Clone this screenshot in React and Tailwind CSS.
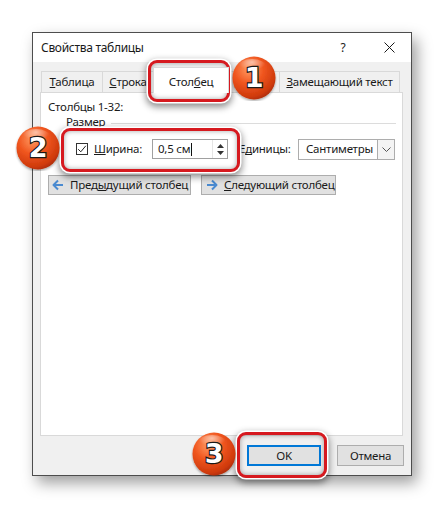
import React from "react";

function Badge({ n, x, y }) {
  const id = "g" + n;
  return (
    <svg
      className="absolute"
      style={{ left: x - 23, top: y - 23 }}
      width="46"
      height="46"
      viewBox="0 0 46 46"
    >
      <defs>
        <radialGradient id={id} cx="0.38" cy="0.3" r="0.75">
          <stop offset="0" stopColor="#ff9a62" />
          <stop offset="0.45" stopColor="#f0561f" />
          <stop offset="0.85" stopColor="#cf3a0c" />
          <stop offset="1" stopColor="#a82a06" />
        </radialGradient>
        <radialGradient id={id + "h"} cx="0.5" cy="0.2" r="0.5">
          <stop offset="0" stopColor="#ffffff" stopOpacity="0.55" />
          <stop offset="1" stopColor="#ffffff" stopOpacity="0" />
        </radialGradient>
        <filter id={id + "s"} x="-20%" y="-20%" width="140%" height="140%">
          <feDropShadow dx="0" dy="1.5" stdDeviation="1.2" floodColor="#000" floodOpacity="0.35" />
        </filter>
      </defs>
      <circle cx="23" cy="23" r="21.5" fill={`url(#${id})`} filter={`url(#${id}s)`} />
      <ellipse cx="21" cy="12" rx="14" ry="8" fill={`url(#${id}h)`} />
      <text
        x="23"
        y="32"
        textAnchor="middle"
        fontFamily="'DejaVu Sans', sans-serif"
        fontWeight="bold"
        fontSize="27"
        fill="#ffffff"
        stroke="#1a1a1a"
        strokeWidth="2.4"
        paintOrder="stroke"
      >
        {n}
      </text>
    </svg>
  );
}

function RedBox({ x, y, w, h }) {
  return (
    <div
      className="absolute rounded-[9px] border-[3px] border-[#d6191f] shadow-[0_0_0_1.5px_#ffffff,0_3px_7px_2px_rgba(0,0,0,0.45),inset_0_0_5px_rgba(0,0,0,0.35)]"
      style={{ left: x, top: y, width: w, height: h }}
    />
  );
}

function Tab({ children, selected, w }) {
  if (selected) {
    return (
      <div
        className="h-[26px] bg-white border-l border-t border-r border-[#d9d9d9] flex items-center justify-center -mb-px -ml-px relative z-10 pt-[2px]"
        style={{ width: w }}
      >
        {children}
      </div>
    );
  }
  return (
    <div
      className="h-[21px] bg-[#f0f0f0] border-l border-t border-r border-[#d9d9d9] flex items-center justify-center -ml-px first:ml-0"
      style={{ width: w }}
    >
      {children}
    </div>
  );
}

function ArrowLeft() {
  return (
    <svg width="12" height="12" viewBox="0 0 12 12">
      <path d="M11 6H2M6 1.5L1.5 6L6 10.5" fill="none" stroke="#4a8ad0" strokeWidth="2" strokeLinejoin="round" />
    </svg>
  );
}

function ArrowRight() {
  return (
    <svg width="12" height="12" viewBox="0 0 12 12">
      <path d="M1 6H10M6 1.5L10.5 6L6 10.5" fill="none" stroke="#4a8ad0" strokeWidth="2" strokeLinejoin="round" />
    </svg>
  );
}

export default function App() {
  return (
    <div className="relative w-[444px] h-[508px] bg-white text-[11.5px] tracking-[-0.25px] text-[#1a1a1a] font-['Noto_Sans',sans-serif] leading-none whitespace-nowrap overflow-hidden">
      <div className="pt-[32px] pl-[32px]">
        <div className="w-[380px] h-[444px] border border-[#4d4d4d] bg-[#f0f0f0] shadow-[5px_7px_14px_rgba(0,0,0,0.38)] flex flex-col">
          {/* title bar */}
          <div className="h-[29px] bg-white flex items-center pl-[8px]">
            <div className="flex-1 text-[12px] tracking-[-0.3px] text-[#1a1a1a]">Свойства таблицы</div>
            <div className="w-[20px] text-[12px] text-center mr-[31px]">?</div>
            <svg className="mr-[16px]" width="11" height="11" viewBox="0 0 11 11">
              <path d="M0.5 0.5L10.5 10.5M10.5 0.5L0.5 10.5" stroke="#1a1a1a" strokeWidth="1" />
            </svg>
          </div>

          {/* body */}
          <div className="flex-1 flex flex-col pt-[8px] pl-[7px] pr-[8px]">
            <div className="flex items-end h-[22px] pl-px">
              <Tab w={62}>
                <span><span className="underline">Т</span>аблица</span>
              </Tab>
              <Tab w={52}>
                <span><span className="underline">С</span>трока</span>
              </Tab>
              <Tab selected w={76}>
                <span>Стол<span className="underline">б</span>ец</span>
              </Tab>
              <Tab w={52}>
                <span><span className="underline">Я</span>чейка</span>
              </Tab>
              <Tab w={121}>
                <span><span className="underline">З</span>амещающий текст</span>
              </Tab>
            </div>

            <div className="h-[344px] bg-white border border-[#d9d9d9] pt-[7px] pl-[7px]">
              <div className="h-[14px] flex items-center">Столбцы 1-32:</div>
              <div className="h-[16px] flex items-center pl-[18px] pr-[6px]">
                <span>Размер</span>
                <div className="flex-1 h-px bg-[#dcdcdc] ml-[6px] mt-[2px]" />
              </div>

              <div className="mt-[9px] h-[20px] flex items-center pl-[28px]">
                <div className="w-[12px] h-[12px] border border-[#333] bg-white flex items-center justify-center">
                  <svg width="10" height="10" viewBox="0 0 10 10">
                    <path d="M1.2 5.2L3.8 7.8L8.8 1.8" fill="none" stroke="#222" strokeWidth="1" />
                  </svg>
                </div>
                <div className="w-[64px] pl-[6px]">
                  <span className="underline">Ш</span>ирина:
                </div>
                <div className="w-[76px] h-[20px] border border-[#a0a0a0] bg-white flex items-center">
                  <div className="flex-1 pl-[5px] flex items-center">
                    0,5 см<span className="w-px h-[13px] bg-[#111] ml-[1px]" />
                  </div>
                  <div className="w-[15px] h-[18px] flex flex-col items-center justify-center gap-[3px] border-l border-[#e5e5e5]">
                    <svg width="7" height="4" viewBox="0 0 7 4"><path d="M0 4L3.5 0L7 4Z" fill="#333" /></svg>
                    <svg width="7" height="4" viewBox="0 0 7 4"><path d="M0 0L3.5 4L7 0Z" fill="#333" /></svg>
                  </div>
                </div>
                <div className="w-[59px] pl-[11px] box-content">
                  Е<span className="underline">д</span>иницы:
                </div>
                <div className="w-[97px] h-[21px] border border-[#adadad] bg-white flex items-center">
                  <div className="flex-1 pl-[7px]">Сантиметры</div>
                  <div className="w-[18px] h-[21px] -mr-px border border-[#adadad] bg-[#f4f4f4] flex items-center justify-center">
                    <svg width="9" height="5" viewBox="0 0 9 5"><path d="M0.5 0.5L4.5 4.5L8.5 0.5" fill="none" stroke="#555" strokeWidth="1" /></svg>
                  </div>
                </div>
              </div>

              <div className="mt-[16px] flex gap-[10px]">
                <div className="w-[143px] h-[20px] bg-[#e1e1e1] border border-[#adadad] flex items-center gap-[6px] pl-[3px]">
                  <ArrowLeft />
                  <span>Пред<span className="underline">ы</span>дущий столбец</span>
                </div>
                <div className="w-[135px] h-[20px] bg-[#e1e1e1] border border-[#adadad] flex items-center gap-[6px] pl-[4px]">
                  <ArrowRight />
                  <span><span className="underline">С</span>ледующий столбец</span>
                </div>
              </div>
            </div>

            <div className="flex justify-end gap-[16px] pt-[9px] -mr-px">
              <div className="w-[74px] h-[21px] bg-[#e1e1e1] border-2 border-[#0078d7] flex items-center justify-center">
                OK
              </div>
              <div className="w-[67px] h-[21px] bg-[#e1e1e1] border border-[#adadad] flex items-center justify-center">
                Отмена
              </div>
            </div>
          </div>
        </div>
      </div>

      <RedBox x={148} y={60} w={82} h={42} />
      <RedBox x={61} y={128} w={179} h={44} />
      <RedBox x={237} y={432} w={90} h={46} />

      <Badge n={1} x={254} y={78} />
      <Badge n={2} x={38} y={148} />
      <Badge n={3} x={214} y={454} />
    </div>
  );
}
